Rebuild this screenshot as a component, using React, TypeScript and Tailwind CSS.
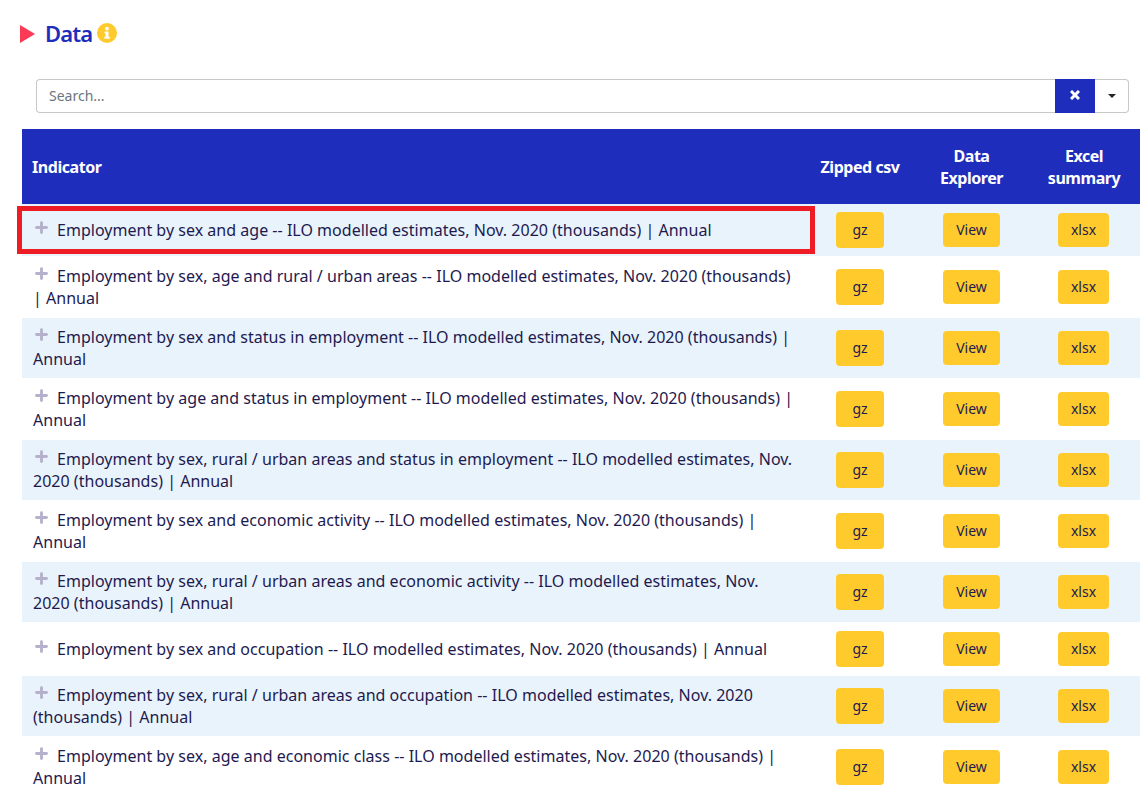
import { Plus } from 'lucide-react';

const rows = [
  'Employment by sex and age -- ILO modelled estimates, Nov. 2020 (thousands) | Annual',
  'Employment by sex, age and rural / urban areas -- ILO modelled estimates, Nov. 2020 (thousands) | Annual',
  'Employment by sex and status in employment -- ILO modelled estimates, Nov. 2020 (thousands) | Annual',
  'Employment by age and status in employment -- ILO modelled estimates, Nov. 2020 (thousands) | Annual',
  'Employment by sex, rural / urban areas and status in employment -- ILO modelled estimates, Nov. 2020 (thousands) | Annual',
  'Employment by sex and economic activity -- ILO modelled estimates, Nov. 2020 (thousands) | Annual',
  'Employment by sex, rural / urban areas and economic activity -- ILO modelled estimates, Nov. 2020 (thousands) | Annual',
  'Employment by sex and occupation -- ILO modelled estimates, Nov. 2020 (thousands) | Annual',
  'Employment by sex, rural / urban areas and occupation -- ILO modelled estimates, Nov. 2020 (thousands) | Annual',
  'Employment by sex, age and economic class -- ILO modelled estimates, Nov. 2020 (thousands) | Annual',
];

function FileButton({ label, className }: { label: string; className: string }) {
  return (
    <span
      className={`inline-flex items-center justify-center rounded-[4px] bg-[#ffca2c] text-[14px] tracking-normal text-[#1e1a4f] ${className}`}
    >
      {label}
    </span>
  );
}

export default function App() {
  return (
    <div className="min-h-[807px] overflow-hidden bg-white font-['Noto_Sans',sans-serif] text-[#1e1a4f]">
      <div className="flex items-center pl-5 pt-[24px]">
        <span className="h-0 w-0 border-y-[9px] border-l-[15px] border-y-transparent border-l-[#fd3a55]" />
        <h2 className="ml-[10px] -translate-y-px text-[22px] leading-[20px] font-semibold tracking-[-0.9px] text-[#1f2dbd]">Data</h2>
        <svg viewBox="0 0 20 20" className="ml-[5px] h-5 w-5 -translate-y-px">
          <circle cx="10" cy="10" r="10" fill="#ffca2c" />
          <circle cx="10" cy="5.6" r="1.9" fill="#fff" />
          <path d="M7.6 8.6h3.9v5.2h1.2v1.9H7.4v-1.9h1.2v-3.3h-1z" fill="#fff" />
        </svg>
      </div>

      <div className="mt-[35px] ml-[36px] flex h-[34px] w-[1093px]">
        <div className="flex flex-1 items-center rounded-l-[4px] border border-r-0 border-[#c8c8c8] px-3 pb-[2px] text-[14px] text-[#6c757d]">
          Search...
        </div>
        <div className="flex w-10 items-center justify-center bg-[#1f2dbd] pb-[2px] text-white">
          <svg viewBox="0 0 10 10" className="h-[10px] w-[10px]" fill="none" stroke="currentColor" strokeWidth="3">
            <path d="M1 1l8 8M9 1l-8 8" />
          </svg>
        </div>
        <div className="flex w-[34px] items-center justify-center rounded-r-[4px] border border-l-0 border-[#c8c8c8]">
          <span className="h-0 w-0 border-x-[4px] border-t-[4px] border-x-transparent border-t-[#212529]" />
        </div>
      </div>

      <div className="relative mt-4 ml-[22px] w-[1118px]">
        <table className="w-full table-fixed border-separate border-spacing-0 text-[16px] leading-[22px] tracking-[0.02px]">
          <thead>
            <tr className="h-[75px] bg-[#1f2dbd] text-white">
              <th className="w-[783px] px-[10px] text-left font-bold tracking-[-0.45px]">Indicator</th>
              <th className="w-[110px] font-bold tracking-[-0.45px]">Zipped csv</th>
              <th className="w-[113px] font-bold tracking-[-0.45px]">
                Data
                <br />
                Explorer
              </th>
              <th className="font-bold tracking-[-0.45px]">
                Excel
                <br />
                summary
              </th>
            </tr>
          </thead>
          <tbody>
            {rows.map((text, index) => (
              <tr key={index} className={`${index % 2 === 0 ? 'bg-[#e9f3fb]' : 'bg-white'} ${index === 0 || index === 7 ? 'h-[53px]' : 'h-[61px]'}`}>
                <td className="border-b border-white pt-[7px] pr-[10px] pb-[8px] pl-[11px]">
                  <Plus size={17} strokeWidth={4} className="mr-[7px] -mt-[7px] inline-block text-[#b5b0cb]" />
                  {text}
                </td>
                <td className="border-b border-white pb-px text-center">
                  <FileButton label="gz" className="h-9 w-12" />
                </td>
                <td className="border-b border-white pb-px text-center">
                  <FileButton label="View" className="h-[34px] w-[57px]" />
                </td>
                <td className="border-b border-white pr-px pb-px text-center">
                  <FileButton label="xlsx" className="h-[34px] w-[51px]" />
                </td>
              </tr>
            ))}
          </tbody>
        </table>
        <div className="absolute top-[77px] -left-[5px] h-[48px] w-[798px] border-[5px] border-[#ee1c25]" />
      </div>
    </div>
  );
}
